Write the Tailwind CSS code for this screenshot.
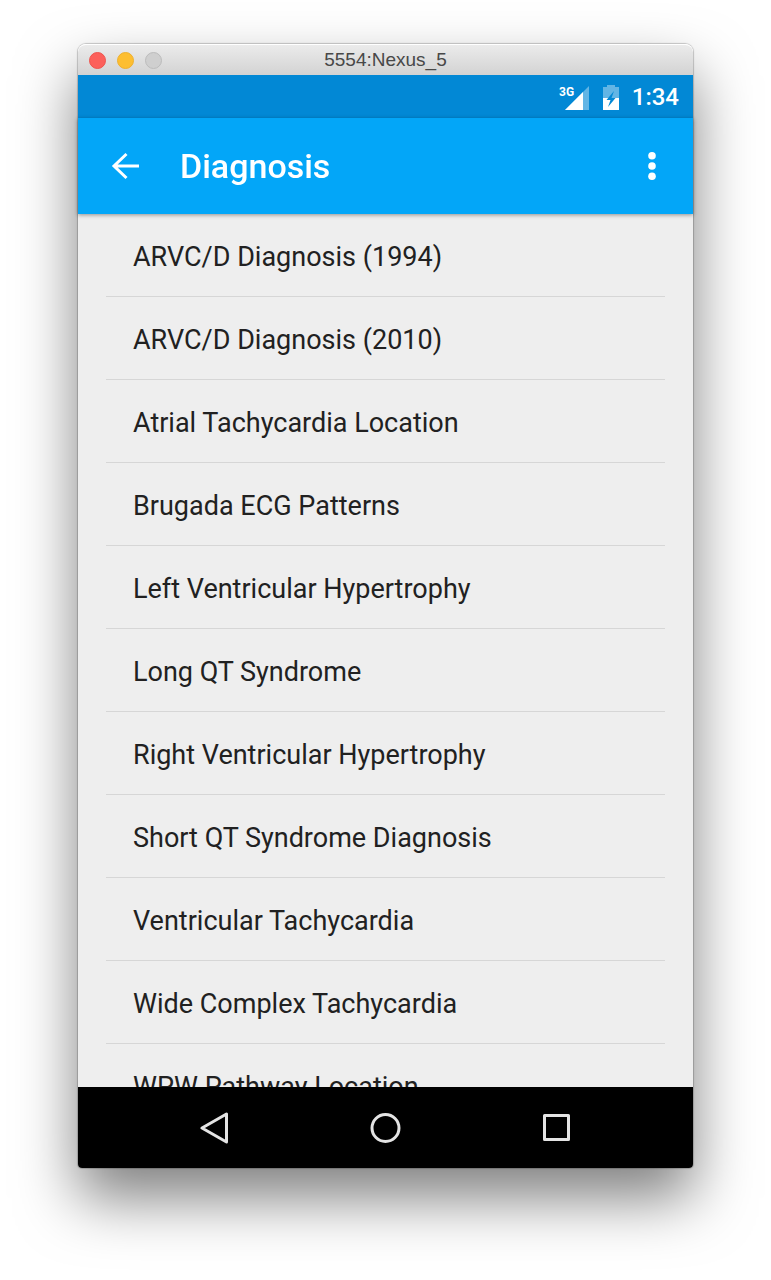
<!DOCTYPE html>
<html lang="en">
<head>
<meta charset="utf-8">
<meta name="viewport" content="width=device-width, initial-scale=1">
<title>5554:Nexus_5</title>
<script src="https://cdn.jsdelivr.net/npm/@tailwindcss/browser@4"></script>
</head>
<body class="flex h-screen flex-col overflow-hidden bg-white px-[78px] pt-11 pb-28 font-['Roboto',sans-serif]">
<div class="flex min-h-0 flex-1 flex-col rounded-t-lg rounded-b-sm shadow-[0_0_1px_1px_rgba(0,0,0,0.2),0_30px_60px_rgba(0,0,0,0.5)]">
  <header class="relative flex h-[31px] shrink-0 items-center justify-center rounded-t-lg border-t border-white bg-linear-to-b from-[#ebebeb] to-[#d3d3d3]">
    <div class="absolute left-[11px] flex gap-[11px]">
      <button aria-label="Close" class="size-[17px] rounded-full border border-[#ee544e] bg-[#fc605b]"></button>
      <button aria-label="Minimize" class="size-[17px] rounded-full border border-[#eeb02e] bg-[#fdbe30]"></button>
      <button aria-label="Zoom" class="size-[17px] rounded-full border border-[#bcbcbc] bg-[#cfcfcf]"></button>
    </div>
    <h1 class="font-['Liberation_Sans',sans-serif] text-[19px] leading-6 text-[#484848]">5554:Nexus_5</h1>
  </header>

  <div class="flex h-[43px] shrink-0 items-center justify-end bg-[#0288d5] pr-3.5 text-white">
    <svg class="mr-[13px] h-7 w-[30px]" viewBox="0 0 30 28" role="img" aria-label="3G signal">
      <path d="M30 3v24H6z" fill="#fff" fill-opacity=".38"/>
      <path d="M24 9v18H6z" fill="#fff"/>
      <text x="0" y="13" fill="#fff" font-family="Roboto" font-size="12" font-weight="700">3G</text>
    </svg>
    <svg class="mr-3 h-7 w-[18px]" viewBox="0 0 18 28" role="img" aria-label="Battery charging">
      <path d="M5 2h8v2h4v11H1V4h4z" fill="#fff" fill-opacity=".38"/>
      <path d="M1 15h16v12H1z" fill="#fff"/>
      <path d="M12 8 4.500 17H8.500L6 24l7.500-9H9.500z" fill="#0288d5"/>
    </svg>
    <time class="text-2xl font-medium">1:34</time>
  </div>

  <nav class="relative z-10 flex h-24 shrink-0 items-center bg-[#03a6f8] pr-7 pl-[33px] text-white shadow-[0_1px_4px_rgba(0,0,0,0.4)]">
    <button aria-label="Back" class="mr-10">
      <svg class="block size-[29px]" viewBox="0 0 29 29" fill="none" stroke="#fff" stroke-width="3"><path d="M28 14H3M15.500 2 3 14 15.500 26"/></svg>
    </button>
    <h2 class="flex-1 text-[34px] leading-10 font-medium">Diagnosis</h2>
    <button aria-label="More options">
      <svg class="block h-[29px] w-[26px]" viewBox="0 0 26 29" fill="#fff"><circle cx="13" cy="3.800" r="3.800"/><circle cx="13" cy="14" r="3.800"/><circle cx="13" cy="24.200" r="3.800"/></svg>
    </button>
  </nav>

  <main class="min-h-0 flex-1 overflow-y-auto bg-[#eeeeee] px-7 text-[27px] leading-8 text-[#212121] [scrollbar-width:none]">
    <ul>
      <li class="flex h-[83px] border-b border-[#d6d6d6]"><a href="#arvc-1994" class="flex flex-1 items-center px-[27px] pt-[3px]">ARVC/D Diagnosis (1994)</a></li>
      <li class="flex h-[83px] border-b border-[#d6d6d6]"><a href="#arvc-2010" class="flex flex-1 items-center px-[27px] pt-[3px]">ARVC/D Diagnosis (2010)</a></li>
      <li class="flex h-[83px] border-b border-[#d6d6d6]"><a href="#atrial-tachycardia" class="flex flex-1 items-center px-[27px] pt-[3px]">Atrial Tachycardia Location</a></li>
      <li class="flex h-[83px] border-b border-[#d6d6d6]"><a href="#brugada" class="flex flex-1 items-center px-[27px] pt-[3px]">Brugada ECG Patterns</a></li>
      <li class="flex h-[83px] border-b border-[#d6d6d6]"><a href="#lvh" class="flex flex-1 items-center px-[27px] pt-[3px]">Left Ventricular Hypertrophy</a></li>
      <li class="flex h-[83px] border-b border-[#d6d6d6]"><a href="#long-qt" class="flex flex-1 items-center px-[27px] pt-[3px]">Long QT Syndrome</a></li>
      <li class="flex h-[83px] border-b border-[#d6d6d6]"><a href="#rvh" class="flex flex-1 items-center px-[27px] pt-[3px]">Right Ventricular Hypertrophy</a></li>
      <li class="flex h-[83px] border-b border-[#d6d6d6]"><a href="#short-qt" class="flex flex-1 items-center px-[27px] pt-[3px]">Short QT Syndrome Diagnosis</a></li>
      <li class="flex h-[83px] border-b border-[#d6d6d6]"><a href="#vt" class="flex flex-1 items-center px-[27px] pt-[3px]">Ventricular Tachycardia</a></li>
      <li class="flex h-[83px] border-b border-[#d6d6d6]"><a href="#wide-complex" class="flex flex-1 items-center px-[27px] pt-[3px]">Wide Complex Tachycardia</a></li>
      <li class="flex h-[83px]"><a href="#wpw" class="flex flex-1 items-center px-[27px] pt-[3px]">WPW Pathway Location</a></li>
    </ul>
  </main>

  <footer class="flex h-[81px] shrink-0 items-center justify-center gap-[139px] rounded-b-sm bg-black">
    <button aria-label="Back">
      <svg class="block size-8" viewBox="0 0 32 32" fill="none" stroke="#e4e4e4" stroke-width="3" stroke-linejoin="round"><path d="M27.500 2v28L3 16z"/></svg>
    </button>
    <button aria-label="Home">
      <svg class="block size-8" viewBox="0 0 32 32" fill="none" stroke="#e4e4e4" stroke-width="3"><circle cx="15.500" cy="16" r="13.500"/></svg>
    </button>
    <button aria-label="Recent apps">
      <svg class="block size-8" viewBox="0 0 32 32" fill="none" stroke="#e4e4e4" stroke-width="3" stroke-linejoin="round"><path d="M3.500 3.500h24v24h-24z"/></svg>
    </button>
  </footer>
</div>
</body>
</html>
